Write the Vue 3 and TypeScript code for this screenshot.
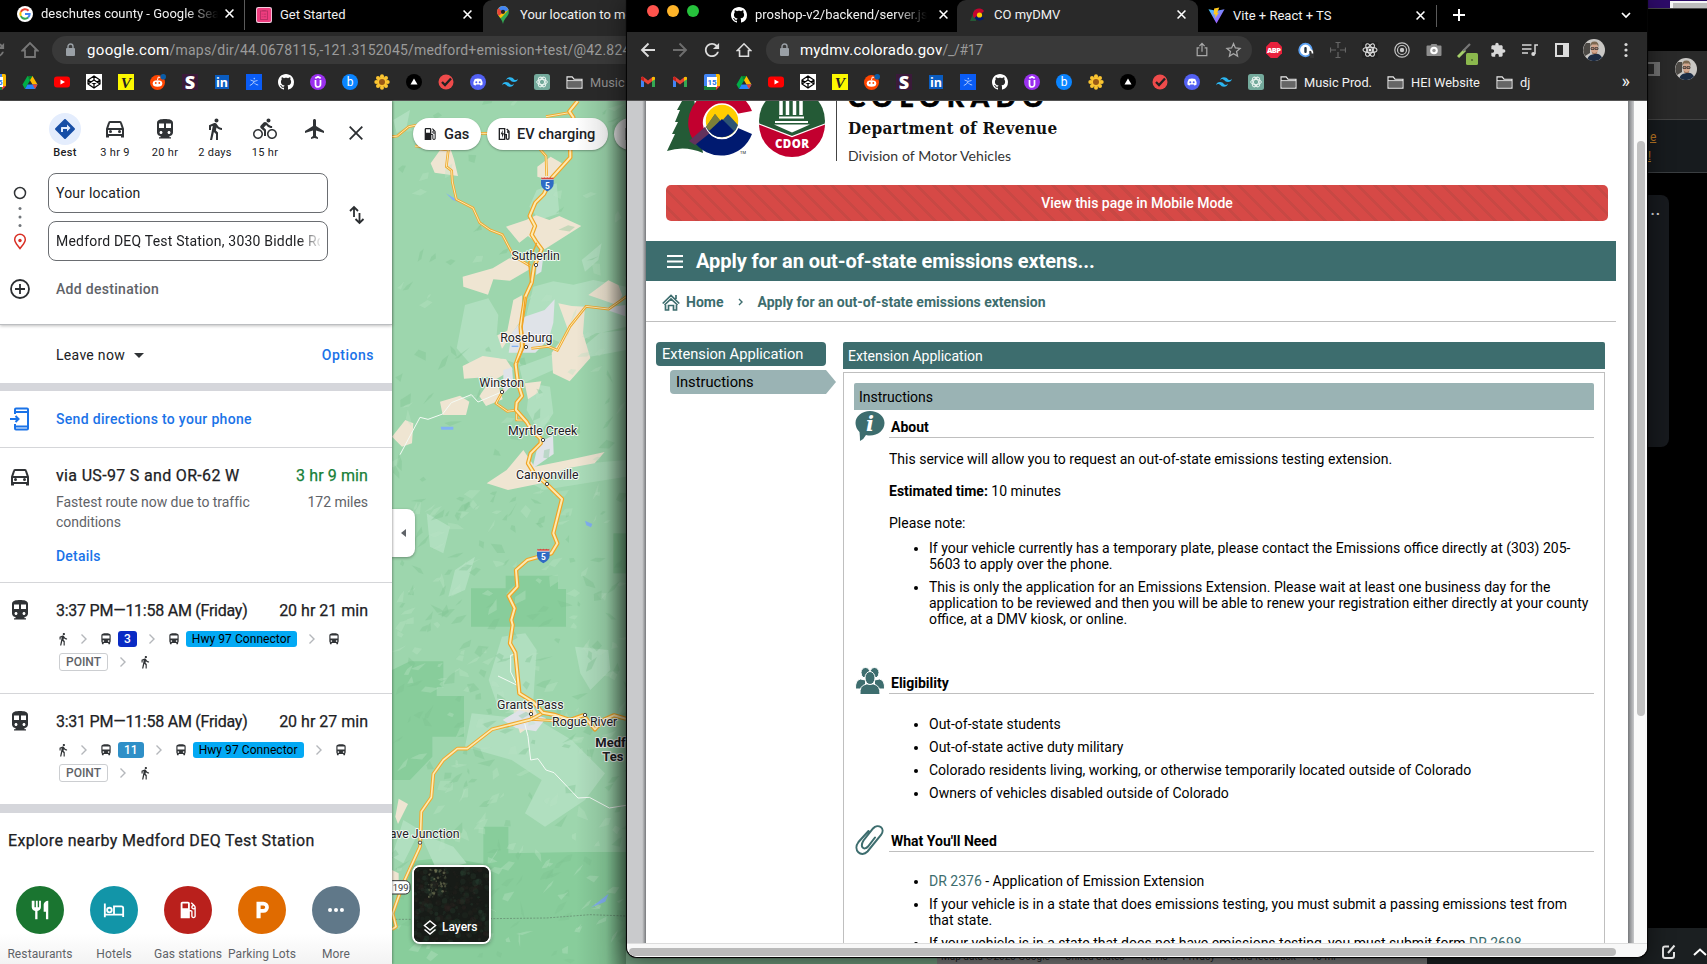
<script setup lang="ts">
interface Segment { kind: 'walk' | 'bus' | 'sep' | 'badge' | 'outline'; text?: string; tone?: string }
interface Trip { title: string; time: string; first: Segment[] }

const bookmarks: string[] = ['gmail', 'gmail', 'cal', 'drive', 'yt', 'codepen', 'vee', 'reddit', 'slack', 'linkedin', 'figure', 'github', 'udemy', 'bee', 'flower', 'tri', 'check', 'discord', 'tailwind', 'gpt']
const backBookmarks = bookmarks.slice(2)
const extensions: string[] = ['abp', 'onepass', 'cross', 'react', 'target', 'camera', 'dropper', 'puzzle', 'queue', 'sidebar', 'avatar', 'dots']

const modes = [
  { icon: 'diamond', label: 'Best' },
  { icon: 'car', label: '3 hr 9' },
  { icon: 'train', label: '20 hr' },
  { icon: 'walk', label: '2 days' },
  { icon: 'bike', label: '15 hr' },
  { icon: 'flight', label: '' },
]

const seg = (num: string, tone: string): Segment[] => [
  { kind: 'walk' }, { kind: 'sep' }, { kind: 'bus' }, { kind: 'badge', text: num, tone },
  { kind: 'sep' }, { kind: 'bus' }, { kind: 'badge', text: 'Hwy 97 Connector', tone: 'sky' },
  { kind: 'sep' }, { kind: 'bus' },
]
const trips: Trip[] = [
  { title: '3:37 PM—11:58 AM (Friday)', time: '20 hr 21 min', first: seg('3', 'navy') },
  { title: '3:31 PM—11:58 AM (Friday)', time: '20 hr 27 min', first: seg('11', 'steel') },
]

const nearby = [
  { icon: 'food', label: 'Restaurants', tone: 'green' },
  { icon: 'bed', label: 'Hotels', tone: 'teal' },
  { icon: 'gas', label: 'Gas stations', tone: 'red' },
  { icon: 'park', label: 'Parking Lots', tone: 'orange' },
  { icon: 'more', label: 'More', tone: 'slate' },
]

const towns = [
  { name: 'Sutherlin', x: 437, y: 480, dx: 438, dy: 495 },
  { name: 'Roseburg', x: 409, y: 727, dx: 408, dy: 741 },
  { name: 'Winston', x: 335, y: 861, dx: 336, dy: 876 },
  { name: 'Myrtle Creek', x: 458, y: 1005, dx: 459, dy: 1020 },
  { name: 'Canyonville', x: 472, y: 1138, dx: 471, dy: 1152 },
  { name: 'Grants Pass', x: 421, y: 1828, dx: 423, dy: 1842 },
  { name: 'Rogue River', x: 584, y: 1879, dx: 585, dy: 1845 },
  { name: 'ave Junction', x: 104, y: 2215, dx: 90, dy: 2228 },
]

const i5 = 'M563 3 L538 34 L550 52 L540 90 L541 172 L485 234 L462 282 L436 308 L419 348 L435 378 L425 404 L440 428 L455 448 L432 500 L425 548 L406 590 L392 680 L396 740 L377 794 L384 850 L396 888 L380 908 L378 930 L410 966 L424 990 L452 1016 L452 1030 L422 1060 L414 1090 L430 1116 L470 1152 L516 1197 L490 1300 L502 1330 L484 1360 L412 1380 L378 1410 L382 1460 L356 1488 L374 1525 L364 1560 L368 1575 L360 1630 L376 1658 L388 1780 L430 1806 L458 1838 L495 1845 L540 1860 L580 1846 L615 1888 L640 1860 L672 1846 L708 1856'
const us199 = 'M460 1838 L424 1858 L306 1888 L232 1946 L202 1946 L160 1980 L130 2022 L124 2092 L94 2135 L90 2240 L42 2345 L8 2440 L18 2480 L6 2488'

// Deterministic terrain facets scattered over the forest.
let state = 7
const rnd = (): number => { state = (state * 16807) % 2147483647; return state / 2147483647 }
const facets = Array.from({ length: 420 }, (_, i) => {
  const x = rnd() * 710
  const y = i < 80 ? rnd() * 1200 : 1180 + rnd() * 1400
  const angle = -1.2 + rnd() * 1.1 + (rnd() > 0.85 ? 1.6 : 0)
  const l = 16 + rnd() * 40
  const w = 4 + rnd() * 14
  const c = Math.cos(angle)
  const s = Math.sin(angle)
  const at = (u: number, v: number): string => `${(x + u * c - v * s).toFixed(1)},${(y + u * s + v * c).toFixed(1)}`
  const pts = [at(0, 0), at(l * (0.3 + rnd() * 0.4), -w * rnd()), at(l, w * (rnd() - 0.5)), at(l * (0.2 + rnd() * 0.5), w)].join(' ')
  return { pts, light: rnd() > 0.5 }
})
const canopy = Array.from({ length: 420 }, () => ({ x: rnd() * 76, y: rnd() * 76, r: 0.6 + rnd() * 2.6, o: rnd() * 0.4, l: rnd() > 0.5 }))
const clearing = Array.from({ length: 60 }, () => ({ x: 14 + rnd() * 18, y: 2 + rnd() * 28, r: 0.4 + rnd() * 1.1, o: 0.2 + rnd() * 0.4 }))

const notes = [
  ['If your vehicle currently has a temporary plate, please contact the Emissions office directly at (303) 205-', '5603 to apply over the phone.'],
  ['This is only the application for an Emissions Extension. Please wait at least one business day for the', 'application to be reviewed and then you will be able to renew your registration either directly at your county', 'office, at a DMV kiosk, or online.'],
]
const eligible = ['Out-of-state students', 'Out-of-state active duty military', 'Colorado residents living, working, or otherwise temporarily located outside of Colorado', 'Owners of vehicles disabled outside of Colorado']
</script>

<template>
  <div class="desk">
    <svg class="defs" width="0" height="0">
      <linearGradient id="edge"><stop offset="0" stop-color="#000" stop-opacity="0" /><stop offset=".6" stop-color="#000" stop-opacity=".1" /><stop offset="1" stop-color="#000" stop-opacity=".42" /></linearGradient>
      <linearGradient id="vg" x1="0" y1="0" x2="1" y2="1"><stop offset="0" stop-color="#41d1ff" /><stop offset="1" stop-color="#bd34fe" /></linearGradient>
      <symbol id="google" viewBox="0 0 18 18"><circle cx="9" cy="9" r="9" fill="#fff" /><g fill="none" stroke-width="2.300"><path d="M13 5.400A5.300 5.300 0 0 0 4.300 6.600" stroke="#ea4335" /><path d="M4.300 6.600a5.300 5.300 0 0 0 0 4.800" stroke="#fbbc05" /><path d="M4.300 11.400a5.300 5.300 0 0 0 8.200 1.600" stroke="#34a853" /><path d="M9 9h5.200a5.300 5.300 0 0 1-1.700 4" stroke="#4285f4" /></g></symbol>
      <symbol id="clip" viewBox="0 0 18 18"><rect width="18" height="18" rx="2.500" fill="#f3cfe0" /><rect x="1" y="1" width="16" height="16" rx="2" fill="#ee3d7f" /><g fill="none" stroke="#b72f63"><rect x="5" y="4.500" width="8" height="9.500" /><path d="M7 4h4M6.500 8h1m1 0h3M6.500 11h1m1 0h3" /></g></symbol>
      <symbol id="pin" viewBox="0 0 14 20"><path d="M7 0a6.500 6.500 0 0 1 6.500 6.500C13.500 12 8.500 13 7 20 5.500 13 .5 12 .5 6.500A6.500 6.500 0 0 1 7 0z" fill="#34a853" /><path d="M7 0A6.500 6.500 0 0 1 13.200 4.500L4.500 13.500C2.500 11.500.5 9.500.5 6.500A6.500 6.500 0 0 1 7 0z" fill="#fbbc04" /><path d="M7 0a6.500 6.500 0 0 1 6.200 4.500L8 7 2 10.500C-1 4 3 0 7 0z" fill="#4285f4" /><path d="M2 2.400 7 7 2.200 11C-.5 7 .5 4 2 2.400z" fill="#ea4335" /><circle cx="7" cy="6.500" r="2.300" fill="#222" /></symbol>
      <symbol id="gmail" viewBox="0 0 16 16"><path d="M1 3v10h3V6.500z" fill="#4285f4" /><path d="M15 3v10h-3V6.500z" fill="#34a853" /><path d="M1 6V3.500Q2 2 3.500 3L8 6.500 12.500 3v4L8 10.500 3.500 7z" fill="#ea4335" /><path d="M12 7V3.200Q14 2 15 3.500V5.500z" fill="#fbbc04" /><path d="M1 5.500V4Q2 2.200 4 3.500V7.500z" fill="#c5221f" /></symbol>
      <symbol id="cal" viewBox="0 0 16 16"><path d="M0 1.500Q0 0 1.500 0H12v4H4v12H1.500Q0 16 0 14.500z" fill="#4285f4" /><path d="M12 0h2.500Q16 0 16 1.500V12h-4z" fill="#fbbc04" /><path d="M0 12h12v4H1.500Q0 16 0 14.500z" fill="#188038" /><path d="M12 12h4l-4 4z" fill="#ea4335" /><path d="M3 3h10v10H3z" fill="#fff" /><text x="8" y="11" font-size="8" font-weight="700" font-family="Roboto" text-anchor="middle" fill="#1a73e8">15</text></symbol>
      <symbol id="drive" viewBox="0 0 16 16"><path d="M5.500 2h5l5 8.500h-5z" fill="#ffba00" /><path d="M5.500 2 8 6.500 3 15 .5 10.500z" fill="#00ac47" /><path d="M5.500 10.500h10L13 15H3z" fill="#2684fc" /><path d="M5.500 2h5L8 6.200z" fill="#00832d" /><path d="M13 15l2.500-4.500h-5z" fill="#ea4335" /></symbol>
      <symbol id="yt" viewBox="0 0 16 16"><rect y="2.500" width="16" height="11" rx="3" fill="#f00" /><path d="M6.500 5.500v5L11 8z" fill="#fff" /></symbol>
      <symbol id="codepen" viewBox="0 0 16 16"><path d="M0 0h16v16H0z" fill="#fff" /><g fill="none" stroke="#000" stroke-width="1.200"><path d="M8 2l6 4v4l-6 4-6-4V6zM8 2v4m0 4v4M2 6l6 4 6-4M2 10l6-4 6 4" /></g></symbol>
      <symbol id="vee" viewBox="0 0 16 16"><path d="M0 0h16v16H0z" fill="#fcf800" /><text x="8" y="13.500" font-size="15.500" font-weight="700" font-style="italic" font-family="Liberation Serif" text-anchor="middle" fill="#222">V</text></symbol>
      <symbol id="reddit" viewBox="0 0 16 16"><circle cx="7.500" cy="8.500" r="7.500" fill="#ff4500" /><ellipse cx="7.500" cy="9.500" rx="4.800" ry="3.300" fill="#fff" /><circle cx="5.800" cy="9" r=".9" fill="#ff4500" /><circle cx="9.300" cy="9" r=".9" fill="#ff4500" /><path d="M7.500 6l.8-3 2 .5" stroke="#fff" fill="none" /><circle cx="13.200" cy="2.800" r="2.800" fill="#0b5da8" /></symbol>
      <symbol id="slack" viewBox="0 0 16 16"><path d="M0 0h16v16H0z" fill="#3b1a3a" /><text x="8" y="14.800" font-size="18" font-weight="900" font-family="Open Sans" text-anchor="middle" fill="#fff">S</text></symbol>
      <symbol id="linkedin" viewBox="0 0 16 16"><path d="M1 1h14v14H1z" fill="#0a5cc0" /><text x="8" y="13" font-size="12.500" font-weight="700" font-family="Open Sans" text-anchor="middle" fill="#fff">in</text></symbol>
      <symbol id="figure" viewBox="0 0 16 16"><path d="M0 0h16v16H0z" fill="#0a5cf5" /><circle cx="8.300" cy="4.600" r=".8" fill="#9cc4ff" /><path d="M4.500 6Q8 8.500 11.500 6.500M8 7.500Q7 10.500 3.800 11.500M8 8.500q1.500 2.500 4.200 2.500" stroke="#b8d3ff" stroke-width=".9" fill="none" /></symbol>
      <symbol id="github" viewBox="0 0 16 16"><path fill="#fff" d="M8 0C3.580 0 0 3.580 0 8c0 3.540 2.290 6.530 5.470 7.590.4.070.55-.17.55-.38 0-.19-.01-.82-.01-1.490-2.010.37-2.530-.49-2.690-.94-.09-.23-.48-.94-.82-1.130-.28-.15-.68-.52-.01-.53.63-.01 1.080.58 1.230.82.72 1.210 1.870.87 2.330.66.070-.52.28-.87.51-1.070-1.780-.2-3.640-.89-3.640-3.950 0-.87.31-1.590.82-2.150-.08-.2-.36-1.020.08-2.120 0 0 .67-.21 2.200.82.64-.18 1.320-.27 2-.27s1.360.09 2 .27c1.530-1.040 2.200-.82 2.200-.82.44 1.100.16 1.920.08 2.120.51.56.82 1.270.82 2.150 0 3.070-1.870 3.750-3.650 3.950.29.25.54.73.54 1.480 0 1.070-.01 1.930-.01 2.200 0 .21.15.46.55.38A8.010 8.010 0 0 0 16 8c0-4.420-3.580-8-8-8z" /></symbol>
      <symbol id="udemy" viewBox="0 0 16 16"><circle cx="8" cy="8" r="8" fill="#9a30ee" /><path d="M5.500 6v4.500a2.500 2.500 0 0 0 5 0V6M5.300 4.300 8 2.800l2.700 1.500" stroke="#fff" fill="none" stroke-width="1.700" /></symbol>
      <symbol id="bee" viewBox="0 0 16 16"><circle cx="8" cy="8" r="8" fill="#0a84ff" /><text x="8" y="12" font-size="12" font-family="Roboto" text-anchor="middle" fill="#fff">b</text></symbol>
      <symbol id="flower" viewBox="0 0 16 16"><g fill="#fbc531"><circle cx="8" cy="2.300" r="2" /><circle cx="8" cy="13.700" r="2" /><circle cx="2.300" cy="8" r="2" /><circle cx="13.700" cy="8" r="2" /><circle cx="4" cy="4" r="2" /><circle cx="12" cy="4" r="2" /><circle cx="4" cy="12" r="2" /><circle cx="12" cy="12" r="2" /><circle cx="8" cy="8" r="5" /></g><circle cx="8" cy="8" r="3" fill="#9a5a17" /></symbol>
      <symbol id="tri" viewBox="0 0 16 16"><circle cx="8" cy="8" r="8" fill="#000" /><path d="M8 4.500l3.500 6h-7z" fill="#fff" /></symbol>
      <symbol id="check" viewBox="0 0 16 16"><circle cx="8" cy="8" r="7.500" fill="#ef4b4b" /><path d="M4 8l3 3 6-6.500" stroke="#222" stroke-width="2.300" fill="none" /></symbol>
      <symbol id="discord" viewBox="0 0 16 16"><circle cx="8" cy="8" r="8" fill="#5260f2" /><path d="M4.800 5Q8 3.800 11.200 5q1.600 2.500 1.400 5.500-1.200 1-2.300 1l-.6-1H6.300l-.6 1q-1.200 0-2.300-1Q3.200 7.500 4.800 5z" fill="#fff" /><circle cx="6.300" cy="8.200" r="1" fill="#5260f2" /><circle cx="9.700" cy="8.200" r="1" fill="#5260f2" /></symbol>
      <symbol id="tailwind" viewBox="2 2 20 20"><path fill="#2bb5f0" d="M12 6c-2.670 0-4.330 1.330-5 4 1-1.330 2.170-1.830 3.500-1.500.76.19 1.300.74 1.910 1.350C13.390 10.830 14.500 12 17 12c2.670 0 4.330-1.330 5-4-1 1.330-2.170 1.830-3.500 1.500-.76-.19-1.300-.74-1.910-1.350C15.610 7.170 14.500 6 12 6zM7 12c-2.670 0-4.330 1.330-5 4 1-1.330 2.170-1.830 3.500-1.500.76.19 1.300.74 1.910 1.350C8.390 16.830 9.500 18 12 18c2.670 0 4.330-1.330 5-4-1 1.330-2.170 1.830-3.500 1.500-.76-.19-1.300-.74-1.910-1.350C10.610 13.170 9.500 12 7 12z" /></symbol>
      <symbol id="gpt" viewBox="0 0 16 16"><rect width="16" height="16" rx="2.500" fill="#74aa9c" /><g fill="none" stroke="#e6f2ee"><ellipse cx="8" cy="8" rx="5.300" ry="2.600" /><ellipse cx="8" cy="8" rx="5.300" ry="2.600" transform="rotate(60 8 8)" /><ellipse cx="8" cy="8" rx="5.300" ry="2.600" transform="rotate(120 8 8)" /></g></symbol>
      <symbol id="folder" viewBox="0 0 18 16"><path d="M1 14V2h5.500l2 2.500H17V14z" fill="#292929" stroke="#ececec" stroke-width="1.200" /><path d="M2 6.500h14V13H2z" fill="#666" /><path d="M1 6h16" stroke="#ececec" /></symbol>
      <symbol id="vite" viewBox="0 0 18 18"><path d="M.5 2.500 9 17.500l8.500-15L9 4z" fill="url(#vg)" /><path d="M12 .5 6.500 1.600 6 8h2l-.6 4 4-6H9.600z" fill="#ffc81f" /></symbol>
      <symbol id="colo" viewBox="0 0 16 14"><path d="M5 1 0 13h6z" fill="#245a36" /><path d="M14 3A6 6 0 0 0 4 10l5-2z" fill="#c2042f" /><path d="M14 10.500A6 6 0 0 1 4.500 10L9 6z" fill="#001a70" /><circle cx="9.500" cy="7" r="2.600" fill="#ffcd00" /></symbol>
      <symbol id="x" viewBox="0 0 8 8"><path d="M.5.5l7 7m0-7l-7 7" stroke="#fff" stroke-width="1.400" /></symbol>
      <symbol id="lock" viewBox="0 0 10 14"><rect y="5" width="9" height="8" rx="1" fill="#9aa0a6" /><path d="M2 6V3.500a2.500 2.500 0 0 1 5 0V6" fill="none" stroke="#9aa0a6" stroke-width="1.400" /></symbol>
      <symbol id="back" viewBox="0 0 16 16"><path d="M15 8H2m6.500-6.500L2 8l6.500 6.500" fill="none" stroke="currentColor" stroke-width="1.900" /></symbol>
      <symbol id="reload" viewBox="3 3 18 18"><path fill="currentColor" d="M17.650 6.350C16.200 4.900 14.210 4 12 4c-4.420 0-7.990 3.580-7.990 8s3.570 8 7.990 8c3.730 0 6.840-2.550 7.730-6h-2.080c-.82 2.330-3.040 4-5.650 4-3.310 0-6-2.690-6-6s2.690-6 6-6c1.660 0 3.140.69 4.220 1.780L13 11h7V4l-2.350 2.350z" /></symbol>
      <symbol id="house" viewBox="0 0 18 18"><path d="M1.500 9.500 9 2l7.500 7.500H14V16H4V9.500z" fill="none" stroke="currentColor" stroke-width="1.800" /></symbol>
      <symbol id="share" viewBox="0 0 16 18"><path d="M5 6.500H2.500v9h11v-9H11M8 11V1.500M5 4.500l3-3 3 3" fill="none" stroke="#a9a9a9" stroke-width="1.400" /></symbol>
      <symbol id="star" viewBox="0 0 18 18"><path d="M9 1.800l2.100 4.900 5.300.5-4 3.500 1.200 5.200L9 13.100l-4.600 2.800 1.200-5.200-4-3.500 5.300-.5z" fill="none" stroke="#a9a9a9" stroke-width="1.400" /></symbol>
      <symbol id="abp" viewBox="0 0 16 16"><path d="M4.700 0h6.600L16 4.700v6.600L11.300 16H4.700L0 11.300V4.700z" fill="#e8203c" /><text x="8" y="10.800" font-size="7.500" font-weight="800" font-family="Open Sans" text-anchor="middle" textLength="14" fill="#fff">ABP</text></symbol>
      <symbol id="onepass" viewBox="0 0 16 16"><circle cx="7.500" cy="8" r="6.300" fill="#fff" stroke="#5aa0f2" stroke-width="1.800" /><rect x="6.300" y="5" width="2.400" height="6" rx="1" fill="#234" /><path d="M11 8h5v8h-4z" fill="#333" /><path d="M10 9l1.500-1q3-.5 3 3.500" fill="none" stroke="#fff" stroke-width="1.600" /></symbol>
      <symbol id="cross" viewBox="0 0 16 16"><path d="M8 0v6m0 4v6M0 8h6m4 0h6M5.500.5h5M5.500 15.500h5M.5 5.500v5M15.500 5.500v5" stroke="#666" stroke-width="1.200" /></symbol>
      <symbol id="react" viewBox="0 0 16 16"><path d="M0 0h16v16H0z" fill="#222" /><g fill="none" stroke="#ddd" stroke-width="1.100"><ellipse cx="8" cy="8" rx="7" ry="2.700" /><ellipse cx="8" cy="8" rx="7" ry="2.700" transform="rotate(60 8 8)" /><ellipse cx="8" cy="8" rx="7" ry="2.700" transform="rotate(120 8 8)" /></g><circle cx="8" cy="8" r="1.500" fill="#eee" /></symbol>
      <symbol id="target" viewBox="0 0 16 16"><g fill="none" stroke="#c6c6c6" stroke-width="1.200"><circle cx="8" cy="8" r="7.200" /><circle cx="8" cy="8" r="4.500" /></g><circle cx="8" cy="8" r="2.200" fill="#c6c6c6" /></symbol>
      <symbol id="camera" viewBox="0 0 16 16"><path d="M.5 4.500q0-1 1-1h3l1-1.500h5l1 1.500h3q1 0 1 1V13q0 1-1 1h-13q-1 0-1-1z" fill="#8e8e8e" /><circle cx="8" cy="8.500" r="3.800" fill="#fff" /><circle cx="8" cy="8.500" r="1.700" fill="#999" /></symbol>
      <symbol id="dropper" viewBox="0 0 21 24"><path d="M1 16 8 9" stroke="#a5d06a" stroke-width="3" /><path d="M6 10l7-7" stroke="#777" stroke-width="2.200" /><rect x="9" y="12" width="12" height="12" rx="1.500" fill="#8bb84d" /><circle cx="15" cy="19" r=".7" fill="#111" /></symbol>
      <symbol id="puzzle" viewBox="0 0 24 24"><path fill="#d8d8d8" d="M20.500 11H19V7c0-1.100-.9-2-2-2h-4V3.500C13 2.120 11.880 1 10.500 1S8 2.120 8 3.500V5H4c-1.100 0-1.990.9-1.990 2v3.800H3.500c1.490 0 2.700 1.210 2.700 2.700s-1.210 2.700-2.700 2.700H2V20c0 1.100.9 2 2 2h3.800v-1.500c0-1.490 1.210-2.700 2.700-2.700 1.490 0 2.700 1.210 2.700 2.700V22H17c1.100 0 2-.9 2-2v-4h1.500c1.380 0 2.500-1.120 2.500-2.500S21.880 11 20.500 11z" /></symbol>
      <symbol id="queue" viewBox="0 0 16 16"><path d="M0 3h9.500M0 7h9.500M0 11h6M16 3h-3v9" stroke="#d8d8d8" stroke-width="1.500" fill="none" /><circle cx="11.300" cy="12" r="2" fill="#d8d8d8" /></symbol>
      <symbol id="sidebar" viewBox="0 0 16 16"><path d="M1 1h14v14H1z" fill="#dcdcdc" /><path d="M3 3h6v10H3z" fill="#292929" /></symbol>
      <symbol id="avatar" viewBox="0 0 22 22"><circle cx="11" cy="11" r="11" fill="#c9c7c4" /><path d="M3 4a11 11 0 0 0-1 13l5-3V4z" fill="#4c4945" /><path d="M4.500 20q1-4 5-4.500 7-2.500 9.500 3a11 11 0 0 1-14.500 1.500z" fill="#1c2c44" /><ellipse cx="11.500" cy="9.800" rx="3.600" ry="5.200" fill="#d3a58c" /><path d="M7.300 8Q6.500 2.500 11.500 2.500q4.500 0 4 5.500L14 5.500H9z" fill="#7d6850" /><path d="M8 8.700h3v1.700H8zm4 0h3v1.700h-3z" fill="none" stroke="#2c2a2a" stroke-width=".8" /><path d="M8.500 12.500q3 3 6 0l-1 2.500h-4z" fill="#9a7058" /></symbol>
      <symbol id="dots" viewBox="0 0 16 16"><g fill="#d8d8d8"><circle cx="8" cy="2.500" r="1.600" /><circle cx="8" cy="8" r="1.600" /><circle cx="8" cy="13.500" r="1.600" /></g></symbol>
      <symbol id="diamond" viewBox="0 0 24 24"><path fill="#174ea6" d="M21.710 11.290l-9-9c-.39-.39-1.020-.39-1.410 0l-9 9c-.39.39-.39 1.020 0 1.410l9 9c.39.39 1.020.39 1.410 0l9-9c.39-.38.39-1.010 0-1.410zM14 14.500V12h-4v3H8v-4c0-.55.45-1 1-1h5V7.500l3.500 3.500-3.500 3.500z" /></symbol>
      <symbol id="car" viewBox="0 0 24 24"><path d="M4 19v-7l2-6q.2-1 1-1h10q.8 0 1 1l2 6v7M4 18h16M4 12h16" fill="none" stroke="currentColor" stroke-width="2" /><path d="M3 12v8.500h3V18h12v2.500h3V12h-2v5H5v-5z" fill="currentColor" /><circle cx="7.500" cy="14.500" r="1.500" fill="currentColor" /><circle cx="16.500" cy="14.500" r="1.500" fill="currentColor" /></symbol>
      <symbol id="train" viewBox="0 0 24 24"><path fill="currentColor" d="M12 2c-4 0-8 .5-8 4v9.500C4 17.430 5.570 19 7.500 19v1.300H6V21.500h12v-1.200h-1.500V19c1.930 0 3.500-1.570 3.500-3.500V6c0-3.500-4-4-8-4zM8 17c-.83 0-1.500-.67-1.500-1.500S7.170 14 8 14s1.500.67 1.500 1.500S8.830 17 8 17zm3-6H6V6.500h5V11zm2 0V6.500h5V11h-5zm3 6c-.83 0-1.500-.67-1.500-1.500s.67-1.500 1.500-1.500 1.500.67 1.500 1.500-.67 1.500-1.500 1.500z" /></symbol>
      <symbol id="walk" viewBox="0 0 24 24"><path fill="currentColor" d="M13.500 5.500c1.100 0 2-.9 2-2s-.9-2-2-2-2 .9-2 2 .9 2 2 2zM9.800 8.900L7 23h2.100l1.800-8 2.100 2v6h2v-7.500l-2.100-2 .6-3C14.800 12 16.800 13 19 13v-2c-1.900 0-3.500-1-4.300-2.400l-1-1.600c-.4-.6-1-1-1.700-1-.3 0-.5.100-.8.100L6 8.300V13h2V9.600l1.800-.7" /></symbol>
      <symbol id="bike" viewBox="0 0 24 24"><path fill="currentColor" d="M15.500 5.500c1.100 0 2-.9 2-2s-.9-2-2-2-2 .9-2 2 .9 2 2 2zM5 12c-2.800 0-5 2.200-5 5s2.200 5 5 5 5-2.200 5-5-2.200-5-5-5zm0 8.500c-1.900 0-3.500-1.600-3.500-3.500s1.600-3.500 3.500-3.500 3.500 1.600 3.500 3.500-1.600 3.500-3.500 3.500zm5.800-10l2.400-2.400.8.800c1.300 1.300 3 2.100 5.100 2.100V9c-1.500 0-2.700-.6-3.600-1.500l-1.900-1.900c-.5-.4-1-.6-1.600-.6s-1.100.2-1.400.6L7.800 8.400c-.4.4-.6.9-.6 1.400 0 .6.2 1.100.6 1.400L11 14v5h2v-6.200l-2.200-2.300zM19 12c-2.800 0-5 2.200-5 5s2.200 5 5 5 5-2.200 5-5-2.200-5-5-5zm0 8.500c-1.900 0-3.500-1.600-3.500-3.500s1.600-3.500 3.500-3.500 3.500 1.600 3.500 3.500-1.600 3.500-3.500 3.500z" /></symbol>
      <symbol id="flight" viewBox="0 0 24 24"><path fill="currentColor" d="M21 16v-2l-8-5V3.500c0-.83-.67-1.500-1.500-1.500S10 2.670 10 3.500V9l-8 5v2l8-2.500V19l-2 1.500V22l3.500-1 3.500 1v-1.500L13 19v-5.500l8 2.500z" /></symbol>
      <symbol id="bus" viewBox="0 0 24 24"><path fill="currentColor" d="M4 16c0 .88.39 1.670 1 2.220V20c0 .55.45 1 1 1h1c.55 0 1-.45 1-1v-1h8v1c0 .55.45 1 1 1h1c.55 0 1-.45 1-1v-1.780c.61-.55 1-1.340 1-2.220V6c0-3.500-3.580-4-8-4s-8 .5-8 4v10zm3.500 1c-.83 0-1.500-.67-1.500-1.500S6.670 14 7.500 14s1.500.67 1.500 1.500S8.330 17 7.500 17zm9 0c-.83 0-1.500-.67-1.500-1.500s.67-1.500 1.500-1.500 1.500.67 1.500 1.500-.67 1.500-1.500 1.500zm1.500-6H6V6h12v5z" /></symbol>
      <symbol id="sep" viewBox="0 0 12 12"><path d="M3.500 1.500 8 6l-4.500 4.500" fill="none" stroke="#b4b7bb" stroke-width="1.400" /></symbol>
      <symbol id="food" viewBox="0 0 24 24"><path fill="#fff" d="M11 9H9.500V2h-2v7H6V2H3v7c0 2.120 1.660 3.840 3.750 3.970V22h2.500v-9.030C11.340 12.840 13 11.120 13 9V2h-2v7zm5-3v8h2.500v8H21V2c-2.760 0-5 2.240-5 4z" /></symbol>
      <symbol id="bed" viewBox="0 0 24 24"><path d="M2 5v15M2 17h20M22 19.500V10q0-2-2-2h-8v9" fill="none" stroke="#fff" stroke-width="2" /><circle cx="7" cy="12" r="2.500" fill="none" stroke="#fff" stroke-width="2" /></symbol>
      <symbol id="gas" viewBox="0 0 24 24"><path fill="currentColor" d="M19.770 7.230l.01-.01-3.720-3.720L15 4.560l2.110 2.110c-.94.36-1.610 1.260-1.610 2.330 0 1.380 1.120 2.500 2.500 2.500.36 0 .69-.08 1-.21v7.210c0 .55-.45 1-1 1s-1-.45-1-1V14c0-1.100-.9-2-2-2h-1V5c0-1.100-.9-2-2-2H6c-1.100 0-2 .9-2 2v16h10v-7.500h1.500v5c0 1.380 1.120 2.500 2.500 2.500s2.500-1.120 2.500-2.500V9c0-.69-.28-1.320-.73-1.770zM12 10H6V5h6v5zm6 0c-.55 0-1-.45-1-1s.45-1 1-1 1 .45 1 1-.45 1-1 1z" /></symbol>
      <symbol id="ev" viewBox="0 0 24 24"><path d="M5 4h8v16H5zM13 13h2.500v5a2 2 0 0 0 4 0V8L16 4.500" fill="none" stroke="currentColor" stroke-width="2" /><circle cx="18" cy="9" r="1.600" fill="currentColor" /><path d="M10 6l-3 6.500h2V18l3-7h-2z" fill="currentColor" /></symbol>
      <symbol id="park" viewBox="0 0 24 24"><path d="M6 3h7.500a6 6 0 0 1 0 12H10.500v6H6zM10.500 7v4h3a2 2 0 0 0 0-4z" fill="#fff" fill-rule="evenodd" /></symbol>
      <symbol id="more" viewBox="0 0 24 24"><g fill="#fff"><circle cx="5.500" cy="12" r="2.200" /><circle cx="12" cy="12" r="2.200" /><circle cx="18.500" cy="12" r="2.200" /></g></symbol>
      <symbol id="shield" viewBox="0 0 40 46"><path d="M2 2q5 3 9 0 4 3 9 0 5 3 9 0 4 3 9 0v8H2z" fill="#d8483f" /><path d="M1 9h38v12q0 14-19 24Q1 35 1 21z" fill="#2f6bc4" /><path d="M1 8h38v2H1z" fill="#fff" /><text x="20" y="36" font-size="25" font-weight="700" font-family="Roboto" text-anchor="middle" fill="#fff">5</text></symbol>
    </svg>

    <!-- Far background window -->
    <aside class="far">
      <div class="far-purple"><i></i></div>
      <div class="far-tabs"></div>
      <div class="far-tools">
        <svg class="s16 dim"><use href="#sidebar" /></svg>
        <svg class="s22"><use href="#avatar" /></svg>
      </div>
      <div class="far-note"><u>e</u><u class="bang">!</u></div>
      <div class="far-body"><div class="far-card">··</div></div>
      <div class="far-foot">
        <svg width="16" height="16" viewBox="0 0 16 16"><path d="M8 2.500H4q-2 0-2 2V12q0 2 2 2h7q2 0 2-2V8M7 9l6.500-7.500" fill="none" stroke="#e4e4e4" stroke-width="2" /></svg>
        <svg width="14" height="10" viewBox="0 0 14 10"><path d="M1 8l6-5.500L13 8" fill="none" stroke="#fff" stroke-width="2" /></svg>
      </div>
    </aside>

    <!-- Maps window -->
    <section class="maps">
      <div class="tabs">
        <div class="tab t1"><svg class="s18"><use href="#google" /></svg><span class="fade w177">deschutes county - Google Sea</span><svg class="s8"><use href="#x" /></svg></div>
        <div class="tab t2"><svg class="s18"><use href="#clip" /></svg><span class="grow">Get Started</span><svg class="s8"><use href="#x" /></svg></div>
        <div class="tab t3 on"><svg width="14" height="18"><use href="#pin" /></svg><span>Your location to medford</span></div>
      </div>
      <div class="bar">
        <svg class="s18 re"><use href="#reload" /></svg><svg class="s18 ho"><use href="#house" /></svg>
        <div class="pill back-pill"><svg width="10" height="14"><use href="#lock" /></svg><span class="url u1"><b>google.com</b>/maps/dir/44.0678115,-121.3152045/medford+emission+test/@42.8241</span></div>
      </div>
      <div class="marks back-marks">
        <span v-for="(b, i) in backBookmarks" :key="i" class="mark"><svg class="s16"><use :href="'#' + b" /></svg></span>
        <svg class="fold"><use href="#folder" /></svg><span class="dimtxt">Music Prod.</span>
      </div>

      <div class="maps-body">
        <div class="panel">
          <header class="head">
            <div class="modes">
              <div v-for="(m, i) in modes" :key="m.icon" class="mode" :class="{ best: i === 0 }">
                <span class="disc"><svg class="s24"><use :href="'#' + m.icon" /></svg></span><label>{{ m.label }}</label>
              </div>
              <svg class="close" width="14" height="14" viewBox="0 0 14 14"><path d="M.7.7l12.600 12.600m0-12.600L.7 13.300" stroke="#2b2e31" stroke-width="1.800" /></svg>
            </div>
            <div class="route">
              <svg class="trail" width="40" height="88" viewBox="0 0 40 88"><circle cx="20" cy="20" r="5.500" fill="none" stroke="#303336" stroke-width="1.500" /><g fill="#70757a"><circle cx="20" cy="35.500" r="1.500" /><circle cx="20" cy="44" r="1.500" /><circle cx="20" cy="52.500" r="1.500" /></g><path d="M20 75.500c-2-3-5.300-5.500-5.300-9a5.300 5.300 0 0 1 10.600 0c0 3.500-3.300 6-5.300 9z" fill="none" stroke="#d93025" stroke-width="1.500" /><circle cx="20" cy="67.500" r="1.700" fill="#d93025" /></svg>
              <div class="fields"><div class="field">Your location</div><div class="field"><span class="clip">Medford DEQ Test Station, 3030 Biddle Rd</span></div></div>
              <svg class="swap" width="16" height="20" viewBox="0 0 16 20"><path d="M5 12V2M1 6l4-4 4 4M10.500 8v10M6.500 14l4 4 4-4" fill="none" stroke="#2b2e31" stroke-width="1.800" /></svg>
            </div>
            <div class="add"><svg width="20" height="20" viewBox="0 0 20 20"><circle cx="10" cy="10" r="9" fill="none" stroke="#2b2e31" stroke-width="1.800" /><path d="M10 5v10M5 10h10" stroke="#2b2e31" stroke-width="1.800" /></svg><span>Add destination</span></div>
          </header>
          <div class="leave"><span>Leave now</span><i class="caret"></i><a>Options</a></div>
          <div class="send"><svg width="20" height="24" viewBox="0 0 20 24"><path d="M5 7V2.500Q5 1.500 6 1.500h11q1 0 1 1v19q0 1-1 1H6q-1 0-1-1V17M5 5h13M5 19.500h13M0 12h8M5.500 9l3 3-3 3" fill="none" stroke="#1a73e8" stroke-width="2" /></svg><a>Send directions to your phone</a></div>
          <article class="trip drive">
            <svg class="s24 lead"><use href="#car" /></svg>
            <div class="grow">
              <div class="row"><h3 class="k1">via US-97 S and OR-62 W</h3><h3 class="fast">3 hr 9 min</h3></div>
              <div class="row sub"><p>Fastest route now due to traffic<br>conditions</p><p>172 miles</p></div>
              <a class="details">Details</a>
            </div>
          </article>
          <article v-for="t in trips" :key="t.title" class="trip">
            <svg class="s24 lead"><use href="#train" /></svg>
            <div class="grow">
              <div class="row"><h3 class="k2">{{ t.title }}</h3><h3>{{ t.time }}</h3></div>
              <div class="segs">
                <template v-for="(s, i) in t.first" :key="i">
                  <span v-if="s.kind === 'badge'" class="badge" :class="s.tone">{{ s.text }}</span>
                  <svg v-else :class="['ic', s.kind]"><use :href="'#' + s.kind" /></svg>
                </template>
              </div>
              <div class="segs second"><span class="point">POINT</span><svg class="ic sep"><use href="#sep" /></svg><svg class="ic walk"><use href="#walk" /></svg></div>
            </div>
          </article>
          <footer class="nearby">
            <h2>Explore nearby Medford DEQ Test Station</h2>
            <div class="spots"><div v-for="n in nearby" :key="n.label" class="spot"><span class="orb" :class="n.tone"><svg class="s24"><use :href="'#' + n.icon" /></svg></span><label>{{ n.label }}</label></div></div>
          </footer>
        </div>

        <div class="map">
          <svg class="terrain" width="234" height="863" viewBox="6 3 702 2589">
            <path d="M0 0h720v2600H0z" fill="#9dd6ad" />
            <g fill="#88cd9b"><path d="M243 1465h104v-38h157v40h24v113H243zM6 1710l54-26h100v77h-20v27h82v122h-95v60L60 2040H6zM280 2180h75v80l210-4h143v336H6v-150l70-160 100-10 104 20z" /><path d="M670 1300h40v120h-40z" /></g>
            <g fill="#b0dfbf"><path d="M225 615l70-20 30 50 -5 60 60 30 12 60-60-20-80 30-52-60zM430 560l60-16 60 10 60-14 98 20v120l-80 20-60 50-100-40-60-60zM400 850l90-40 110-40 108-20v-60l-90 10-120 60-110 40zM420 850l60 10 10 80-40 60-40-70zM440 270l60-20 8 90-60 20-30-40zM575 480l60-50-10 50-40 35zM110 1240l70 40-20 80-40-20zM195 1410l60-40-30 100-50 20zM296 1740l40-130 70-10 34 50-10 150-40 50-70-40zM555 1640l100 10 6 60-60 60-30-50zM245 1840l200 20 100 60 100 100-60 80-120 80-60-40 50-100-90-60-140-40zM90 2200l100 40 40 50-90 20zM40 2160l50 30-50 100-34-20zM10 60l50-30-10 50-30 20z" /><path d="M350 1110l360-30v50l-250 40z" opacity=".7" /></g>
            <g fill="#efe5d2"><path d="M122 190l30-42h30l10 30 12 50-70-10zM442 200l40-30 34 20-40 50-34-10zM348 380l60-20 30-14 40 14 30-12 66 30-110 70-50-40-26 20zM218 530l90-25 50-30 50 10 12 22-60 35-50-4-16 46-74-24zM370 600l26-14v70l-60 90-14-40 30-14zM505 610l40 8 40 2-6 80 22 74-62 70-50-24-4-62 50-66zM218 798l60-30 70 10 20 30-50 30 20 60-50 20-20-30 40-58-86 6zM150 905l60-18 28 18-10 40h-70zM290 1150l60-40 50-60 34 50 100-20 110-24-30 34-90 16-70 44-100 20zM595 585l60-44 30 14 12 30-16 30zM6 1010l40-50 24 10-4 60-30 10zM404 850l50-6-10 34-30 20zM16 2150l10-54 28 16-30 60zM6 2310l20 10v60l-20-20zM370 1830l60-10 20 40-60 40z" /></g>
            <g fill="#dfe3e8"><path d="M404 650l60-20 30-32-4 70-14 50-40 40h-80l10-60zM340 810l26-8 4 50-30 30zM445 1030l44-24 2 56-64 44zM440 490l20-20-6 45-16 10zM636 625l70-10v34zM338 1860l50-30 80 24-30 40-60-10z" /></g>
            <polygon v-for="(f, i) in facets" :key="i" :points="f.pts" :fill="f.light ? '#b9e4c4' : '#7cc391'" opacity=".36" />
            <g fill="#82b1f3"><path d="M168 280l50 30-30-10zM152 980h38v9h-36zM585 1262l22 10-4 10-14-6zM600 2425l56-44-10 24-40 16z" /><path d="M365 737h20v4h-20z" /></g>
            <g fill="none" stroke="#f4fbf5" stroke-width="3"><path d="M330 878l-66 28-20-22-60 24-26 34-44 16-24-6-60 112M404 1870l10 40 8 70 22-4 24 34 24 8 72 76 34-2 60 32 50-8M376 1662l-14 4v50l20 40-58-28" /></g>
            <path d="M6 2458h70M300 2456l170-2 130-10 108 4" fill="none" stroke="#6e9c7b" stroke-width="3" stroke-dasharray="6 4" />
            <g fill="none" stroke="#f0a92e" stroke-width="8"><path d="M6 110l16-2 34-28 24-5 100 25h120M75 138l100 12-6 50 16 12 2 34 12 52 50 26 20 44 32 22 36 14 34 64 50 30M468 50l70-12M450 148l18 20 2 60M424 745l50-6 28 12 38-72 48-60 68 8 54-38M340 870l-22 40 34 24 28-4v30h20M424 1858l108 6M424 1830v30" /></g>
            <g fill="none" stroke="#fdeab1" stroke-width="3"><path d="M6 110l16-2 34-28 24-5 100 25h120M75 138l100 12-6 50 16 12 2 34 12 52 50 26 20 44 32 22 36 14 34 64 50 30M468 50l70-12M450 148l18 20 2 60M424 745l50-6 28 12 38-72 48-60 68 8 54-38M340 870l-22 40 34 24 28-4v30h20M424 1858l108 6M424 1830v30" /></g>
            <path :d="us199" fill="none" stroke="#f0a92e" stroke-width="11" stroke-linejoin="round" /><path :d="us199" fill="none" stroke="#fdeab1" stroke-width="5" stroke-linejoin="round" />
            <path :d="i5" fill="none" stroke="#f0a425" stroke-width="13" stroke-linejoin="round" /><path :d="i5" fill="none" stroke="#fdeab1" stroke-width="6" stroke-linejoin="round" />
            <path d="M440 428l-24 60 6 60M406 590l-10 90 8 60-24 50" fill="none" stroke="#f0a425" stroke-width="4" />
            <use href="#shield" x="452" y="229" width="40" height="47" /><use href="#shield" x="440" y="1344" width="40" height="47" />
            <g font-family="Roboto" font-size="37" text-anchor="middle" fill="#1f2124" stroke="#fff" stroke-opacity=".85" stroke-width="6" paint-order="stroke" stroke-linejoin="round">
              <template v-for="t in towns" :key="t.name"><circle :cx="t.dx" :cy="t.dy" r="5" fill="#fff" stroke="#444" stroke-opacity="1" stroke-width="3" paint-order="fill" /><text :x="t.x" :y="t.y">{{ t.name }}</text></template>
              <g font-weight="700" font-size="39" text-anchor="start"><text x="616" y="1941">Medf</text><text x="637" y="1983">Tes</text></g>
            </g>
            <rect x="-6" y="2342" width="66" height="40" rx="14" fill="#fff" stroke="#333" stroke-width="3" /><text x="32" y="2374" font-family="Roboto" font-size="28" text-anchor="middle" fill="#333">199</text>
          </svg>
          <div class="chips"><span class="chip gaschip"><svg class="s18"><use href="#gas" /></svg>Gas</span><span class="chip"><svg class="s18"><use href="#ev" /></svg>EV charging</span><span class="chip"><svg class="s18"><use href="#ev" /></svg></span></div>
          <div class="collapse"><i></i></div>
          <div class="layers">
            <svg width="76" height="76" viewBox="0 0 76 76"><path d="M0 0h76v76H0z" fill="#171b17" /><circle v-for="(c, i) in canopy" :key="i" :cx="c.x" :cy="c.y" :r="c.r" :fill="c.l ? '#2a4434' : '#2d2421'" :opacity="c.o" /><circle v-for="(c, i) in clearing" :key="'c' + i" :cx="c.x" :cy="c.y" :r="c.r" fill="#80835f" :opacity="c.o" /></svg>
            <span><svg width="14" height="15" viewBox="0 0 14 15"><path d="M7 1l5.500 4.500L7 10 1.500 5.500zM1.500 9.500 7 14l5.500-4.500" fill="none" stroke="#fff" stroke-width="1.500" /></svg>Layers</span>
          </div>
          <svg class="shade" width="50" height="863"><rect width="50" height="863" fill="url(#edge)" /></svg>
        </div>
      </div>
      <div class="credits"><span>Map data ©2023 Google</span><span>United States</span><span>Terms</span><span>Privacy</span><span>Send feedback</span><span>10 mi</span></div>
    </section>

    <!-- DMV window -->
    <section class="dmv">
      <div class="tabs front">
        <div class="lights"><i class="r"></i><i class="y"></i><i class="g"></i></div>
        <div class="tab f1"><svg class="s16"><use href="#github" /></svg><span class="fade w172">proshop-v2/backend/server.js a</span><svg class="s8"><use href="#x" /></svg></div>
        <div class="tab f2 on"><svg width="16" height="14"><use href="#colo" /></svg><span class="grow">CO myDMV</span><svg class="s8"><use href="#x" /></svg></div>
        <div class="tab f3"><svg class="s18"><use href="#vite" /></svg><span class="grow">Vite + React + TS</span><svg class="s8"><use href="#x" /></svg></div>
        <svg class="plus" width="12" height="12" viewBox="0 0 12 12"><path d="M6 0v12M0 6h12" stroke="#fff" stroke-width="2" /></svg>
        <svg class="down" width="10" height="7" viewBox="0 0 10 7"><path d="M1 1l4 4 4-4" stroke="#fff" stroke-width="1.700" fill="none" /></svg>
      </div>
      <div class="bar front-bar">
        <span class="mark"><svg class="s16"><use href="#back" /></svg></span>
        <span class="mark fwd"><svg class="s16"><use href="#back" /></svg></span>
        <span class="mark"><svg class="s16"><use href="#reload" /></svg></span>
        <span class="mark"><svg class="s18"><use href="#house" /></svg></span>
        <div class="pill front-pill"><svg width="10" height="14"><use href="#lock" /></svg><span class="url u2 grow"><b>mydmv.colorado.gov</b>/_/#17</span><svg width="14" height="16"><use href="#share" /></svg><svg class="s16"><use href="#star" /></svg></div>
        <span v-for="e in extensions" :key="e" class="mark"><svg :class="e === 'avatar' ? 's22' : e === 'dropper' ? 'drop' : 's16'"><use :href="'#' + e" /></svg></span>
      </div>
      <div class="marks front-marks">
        <span v-for="(b, i) in bookmarks" :key="i" class="mark"><svg class="s16"><use :href="'#' + b" /></svg></span>
        <svg class="fold"><use href="#folder" /></svg><span class="m1">Music Prod.</span>
        <svg class="fold"><use href="#folder" /></svg><span class="m2">HEI Website</span>
        <svg class="fold"><use href="#folder" /></svg><span class="grow">dj</span><span class="raquo">»</span>
      </div>

      <div class="view">
        <div class="gutter"></div>
        <main class="page">
          <div class="brand">
            <svg width="160" height="60" viewBox="667 101 160 60">
              <path d="M682 101l-5 9h3l-5 12h3l-6 12h3l-8 17q18-6 36 2l-10-60h-8z" fill="#245a36" />
              <path d="M752 111A33 33 0 1 0 693 140l12-9A17 17 0 0 1 736 114z" fill="#c2002f" />
              <path d="M693 140A33 33 0 0 0 752 134l-14-6A17 17 0 0 1 706 128z" fill="#001a70" />
              <path d="M689 141l17-15 4 7-15 12z" fill="#62325c" />
              <circle cx="722" cy="121" r="17" fill="#ffcd00" stroke="#fff" stroke-width="1.500" />
              <path d="M706 127l9-13 6 8 7-8 10 11a17 17 0 0 1-32 2z" fill="#2e5674" /><path d="M706 127l9-13 5 6-9 12z" fill="#7c7f38" /><path d="M709 131l13-12 12 12a16 16 0 0 1-25 0z" fill="#001a70" />
              <text x="740" y="154" font-size="4" font-family="Roboto" fill="#222">TM</text>
              <circle cx="792" cy="121" r="33" fill="#245a36" /><path d="M759 124l33 12 33-12a33 33 0 0 1-66 0z" fill="#c2002f" /><path d="M759 124l33 12.500 33-12.500" fill="none" stroke="#fff" stroke-width="1.200" />
              <path d="M781 100v15M787.500 100v15M794.500 100v15M801 100v15" stroke="#fff" stroke-width="3.500" /><path d="M779 117.500h25M775 122h33" stroke="#fff" stroke-width="2" /><path d="M774 124.500h36l-18 8z" fill="#fff" />
              <text x="792" y="147.500" font-size="11.500" font-weight="800" font-family="Open Sans" text-anchor="middle" textLength="34" fill="#fff">CDOR</text>
            </svg>
            <div class="names"><div class="n1">COLORADO</div><div class="n2">Department of Revenue</div><div class="n3">Division of Motor Vehicles</div></div>
          </div>
          <div class="mobile">View this page in Mobile Mode</div>
          <div class="titlebar"><svg width="16" height="14" viewBox="0 0 16 14"><path d="M0 2h16M0 7.500h16M0 13h16" stroke="#fff" stroke-width="2" /></svg><h1>Apply for an out-of-state emissions extens...</h1></div>
          <nav class="crumbs">
            <svg width="18" height="17" viewBox="0 0 18 17"><path d="M.7 9.500 9 1.500l8.300 8M2.500 11 9 5l6.500 6M3.500 11v5h3v-4.500h5V16h3v-5M14 1v4" fill="none" stroke="#3d6d6e" stroke-width="1.700" /></svg>
            <b class="home">Home</b><svg width="5" height="8" viewBox="0 0 5 8"><path d="M1 1l3 3-3 3" fill="none" stroke="#3d6d6e" stroke-width="1.400" /></svg><b class="here">Apply for an out-of-state emissions extension</b>
          </nav>
          <div class="cols">
            <div class="side"><div class="s-on">Extension Application</div><div class="s-sub">Instructions</div></div>
            <div class="content">
              <div class="c-head">Extension Application</div>
              <div class="sheet">
                <div class="c-sub">Instructions</div>
                <section class="blk about">
                  <svg width="30" height="30" viewBox="0 0 30 30"><path d="M15 0C23 0 29.500 5 29.500 12S23 24.500 15 24.500q-2 0-4-.5-2 4-6 6 0-4-.5-9Q.5 17 .5 12C.5 5 7 0 15 0z" fill="#3d6d6e" /><text x="15" y="20" font-size="21" font-weight="700" font-style="italic" font-family="DejaVu Serif" text-anchor="middle" fill="#fff">i</text></svg>
                  <h4>About</h4>
                </section>
                <div class="txt">
                  <p>This service will allow you to request an out-of-state emissions testing extension.</p>
                  <p><b>Estimated time:</b> 10 minutes</p>
                  <p>Please note:</p>
                </div>
                <ul class="u-note"><li v-for="n in notes" :key="n[0]"><template v-for="(l, i) in n" :key="i"><br v-if="i">{{ l }}</template></li></ul>
                <section class="blk elig">
                  <svg width="30" height="28" viewBox="0 0 30 28"><g fill="#3d6d6e" stroke="#fff"><path d="M6 5.500a4.500 5 0 0 1 9 0q0 3-2 5H8q-2-2-2-5zM15 5.500a4.500 5 0 0 1 9 0q0 3-2 5h-5q-2-2-2-5zM.5 22q-.5-9 5-10l5 1v9zM29.500 22q.5-9-5-10l-5 1v9z" /><path d="M5 27.500q-1-9 6.500-10.500h7q7 1.500 6.500 10.500z" /><ellipse cx="15" cy="11" rx="5" ry="6.500" /></g></svg>
                  <h4>Eligibility</h4>
                </section>
                <ul class="u-elig"><li v-for="e in eligible" :key="e">{{ e }}</li></ul>
                <section class="blk need">
                  <svg width="30" height="30" viewBox="0 0 30 30"><path d="M13.500 6 3.500 17C-2.500 25 6 33 12.500 26.500L26 10c5-7-3-12-8-6.500L8.500 15.500C4.500 22 9 26 13 21.500L20 12.500" fill="none" stroke="#3d6d6e" stroke-width="2" stroke-linecap="round" /></svg>
                  <h4>What You'll Need</h4>
                </section>
                <ul class="u-need">
                  <li><a>DR 2376</a> - Application of Emission Extension</li>
                  <li>If your vehicle is in a state that does emissions testing, you must submit a passing emissions test from<br>that state.</li>
                  <li>If your vehicle is in a state that does not have emissions testing, you must submit form <a>DR 2698</a></li>
                </ul>
              </div>
            </div>
          </div>
        </main>
        <div class="gutter2"></div>
        <div class="vbar"><i></i></div>
      </div>
      <div class="hbar"><i></i></div>
    </section>
  </div>
</template>

<style>
html, body { background: #000; overflow: hidden; }
</style>

<style scoped>
* { box-sizing: border-box; }
.desk { position: relative; width: 1707px; height: 964px; overflow: hidden; background: #000; font-family: Roboto, "Liberation Sans", sans-serif; font-size: 14px; }
.defs { position: absolute; visibility: hidden; }
svg { flex: none; display: block; }
h1, h2, h3, h4, p, ul { margin: 0; padding: 0; font-weight: 400; }
.s8 { width: 9px; height: 9px; } .s16 { width: 16px; height: 16px; } .s18 { width: 16px; height: 18px; } .drop { width: 21px; height: 24px; margin: 5px 0 0 2px; } .s22 { width: 22px; height: 22px; } .s24 { width: 24px; height: 24px; }
.grow { flex: 1; min-width: 0; }

.far { position: absolute; left: 1400px; top: 0; width: 307px; height: 964px; display: flex; flex-direction: column; background: #000; }
.far-purple { height: 9px; background: #2d0b68; border-bottom: 1px solid #4a4a4a; display: flex; justify-content: flex-end; }
.far-purple i { width: 37px; height: 7px; margin-top: 1px; background: #bdbdbd; border: solid #f5f5f5; border-width: 2px 0 0 3px; }
.far-tabs { height: 42px; }
.far-tools { height: 69px; background: #292929; border-bottom: 1px solid #444; display: flex; justify-content: flex-end; gap: 14px; padding: 7px 10px 0 0; }
.far-tools .dim { opacity: .4; margin-top: 3px; }
.far-note { height: 53px; background: #171b1e; border-bottom: 1px solid #3a3e41; padding-left: 250px; display: flex; flex-direction: column; color: #c07b25; font-size: 12px; line-height: 19px; padding-top: 8px; }
.bang { margin-left: -2px; }
.far-body { flex: 1; padding-top: 22px; }
.far-card { width: 269px; height: 252px; border-radius: 8px; background: #171a1e; color: #ddd; text-align: right; padding: 11px 8px 0 0; font-weight: 700; letter-spacing: 1px; }
.far-foot { height: 36px; background: #1b1f21; display: flex; align-items: center; justify-content: flex-end; gap: 16px; padding-top: 14px; }
.far-foot svg { margin-top: -2px; }

.maps { position: absolute; left: 0; top: 0; width: 1427px; height: 976px; border-radius: 0 0 10px 10px; overflow: hidden; background: #6f8f79; }
.tabs { height: 32px; background: #000; display: flex; color: #f1f1f1; font-size: 13px; }
.tab { display: flex; align-items: center; height: 32px; padding-bottom: 3px; gap: 8px; white-space: nowrap; }
.t1 { width: 245px; padding-left: 17px; margin: 0; border-right: 1px solid #5a5a5a; height: 30px; }
.fade { overflow: hidden; -webkit-mask-image: linear-gradient(90deg, #000 82%, transparent); mask-image: linear-gradient(90deg, #000 82%, transparent); }
.w177 { width: 177px; margin-right: -1px; } .w172 { width: 172px; margin-right: 4px; }
.t2 { width: 238px; padding: 0 11px 3px 11px; } .t3 { width: 600px; padding-left: 13px; gap: 10px; }
.tab.on { background: #292929; border-radius: 9px 9px 0 0; }
.bar { height: 36px; background: #292929; display: flex; align-items: center; color: #dcdcdc; }
.re { margin-left: -11px; color: #777; } .ho { margin-left: 16px; color: #777; width: 18px; }
.pill { height: 28px; border-radius: 14px; background: #393939; display: flex; align-items: center; }
.back-pill { flex: 1; margin-left: 13px; padding-left: 14px; gap: 11px; }
.url { font-size: 14px; color: #9b9b9b; white-space: nowrap; } .url b { color: #fff; font-weight: 400; font-size: 15px; }
.u1 { letter-spacing: .2px; } .u1 b { letter-spacing: .35px; } .u2 { letter-spacing: -.3px; } .u2 b { letter-spacing: .2px; }
.marks { height: 33px; background: #292929; border-bottom: 1px solid #545454; display: flex; align-items: center; color: #f1f1f1; font-size: 12.8px; padding-bottom: 4px; white-space: nowrap; }
.mark { width: 32px; display: flex; justify-content: center; flex: none; }
.back-marks { padding-left: 0; } .back-marks .mark:first-child { margin-left: -18px; }
.fold { width: 17px; height: 15px; } .back-marks .fold { margin-left: 8px; }
.dimtxt { color: #8e8e8e; margin-left: 7px; }
.maps-body { display: flex; height: 863px; }
.panel { width: 392px; background: #fff; color: #202124; display: flex; flex-direction: column; flex: none; position: relative; z-index: 1; box-shadow: 1px 0 2px rgba(0,0,0,.3); }
.head { height: 224px; border-bottom: 1px solid #bcbec1; box-shadow: 0 1px 3px rgba(0,0,0,.25); flex: none; }
.modes { display: flex; padding: 12px 0 0 40px; height: 72px; color: #303336; }
.mode { width: 50px; display: flex; flex-direction: column; align-items: center; }
.disc { width: 32px; height: 32px; border-radius: 50%; display: flex; align-items: center; justify-content: center; }
.best .disc { background: #e4edfd; }
.mode label { font-size: 11px; line-height: 14px; margin-top: 1px; letter-spacing: .3px; color: #202124; } .best label { font-weight: 500; }
.close { margin: 13px 0 0 9px; }
.route { display: flex; }
.fields { width: 280px; display: flex; flex-direction: column; gap: 8px; margin-left: 8px; }
.field { height: 40px; border: 1px solid #6a6d71; border-radius: 8px; padding: 0 7px; line-height: 38px; letter-spacing: .2px; white-space: nowrap; }
.clip { display: block; overflow: hidden; -webkit-mask-image: linear-gradient(90deg, #000 92%, transparent 101%); mask-image: linear-gradient(90deg, #000 92%, transparent 101%); }
.swap { margin: 32px 0 0 21px; }
.add { display: flex; align-items: center; margin-top: 18px; padding-left: 10px; gap: 26px; color: #5f6368; font-weight: 500; letter-spacing: .3px; }
.leave { height: 66px; border-bottom: 8px solid #d5d6db; display: flex; align-items: center; padding: 2px 18px 0 56px; box-sizing: border-box; letter-spacing: .3px; flex: none; }
.caret { border: 5px solid transparent; border-top-color: #303336; border-bottom: 0; margin-left: 9px; }
a { color: #1a73e8; font-weight: 500; letter-spacing: .1px; } .leave a { margin-left: auto; letter-spacing: .5px; }
.send { height: 57px; border-bottom: 1px solid #d5d6d9; display: flex; align-items: center; padding-left: 10px; gap: 26px; flex: none; }
.send a { letter-spacing: .32px; }
.trip { height: 111px; border-bottom: 1px solid #d5d6d9; padding: 15px 24px 0 8px; display: flex; gap: 24px; flex: none; }
.drive { height: 135px; }
.lead { color: #303336; } .drive .lead { margin-top: 2px; }
.row { display: flex; justify-content: space-between; white-space: nowrap; }
.row h3 { font-size: 16px; line-height: 26px; height: 24px; font-weight: 400; -webkit-text-stroke: .25px currentColor; }
.row .k1 { letter-spacing: .33px; } .row .k2 { letter-spacing: -.25px; }
.row .fast { color: #188038; letter-spacing: .1px; }
.sub { color: #5f6368; line-height: 20px; letter-spacing: -.03px; margin-top: 5px; }
.details { display: block; margin-top: 16px; line-height: 16px; letter-spacing: .2px; }
.segs { display: flex; align-items: center; margin-top: 8px; height: 18px; color: #303336; font-size: 12px; white-space: nowrap; }
.ic { width: 14px; height: 14px; } .ic.sep { width: 12px; height: 12px; margin: 0 9px 0 8px; }
.badge { height: 16px; border-radius: 3px; line-height: 16px; padding: 0 6px; margin-left: 5px; color: #000; }
.badge + .ic.sep { margin-left: 9px; }
.navy { background: #0a2bc4; color: #fff; font-weight: 500; } .steel { background: #2f8fc7; color: #fff; font-weight: 500; } .sky { background: #03a9f4; letter-spacing: .06px; }
.second { margin-top: 5px; padding-left: 3px; }
.point { height: 18px; width: 49px; text-align: center; line-height: 16px; border: 1px solid #ccced1; border-radius: 3px; color: #5f6368; font-weight: 500; }
.second .ic.sep { margin-left: 9px; }
.nearby { flex: 1; border-top: 9px solid #d5d6db; margin-top: -1px; background: linear-gradient(#fff 80%, #f3f3f3); }
.nearby h2 { font-size: 16px; line-height: 24px; padding: 16px 0 0 8px; -webkit-text-stroke: .25px currentColor; white-space: nowrap; letter-spacing: .36px; }
.spots { display: flex; padding: 33px 0 0 3px; }
.spot { width: 74px; display: flex; flex-direction: column; align-items: center; white-space: nowrap; }
.orb { width: 48px; height: 48px; border-radius: 50%; display: flex; align-items: center; justify-content: center; color: #fff; }
.orb svg { width: 22px; height: 22px; }
.green { background: #1a7530; } .teal { background: #1295a8; } .red { background: #b9201c; } .orange { background: #e06b00; } .slate { background: #607889; }
.spot label { font-size: 12px; line-height: 14px; margin-top: 13px; color: #5f6368; letter-spacing: .1px; }
.map { width: 1035px; position: relative; overflow: hidden; background: #6f9a7c; }
.shade { position: absolute; left: 184px; top: 0; }
.chips { position: absolute; left: 21px; top: 17px; display: flex; gap: 6px; }
.chip { height: 32px; border-radius: 16px; background: #fff; display: flex; align-items: center; gap: 5px; padding: 0 13px 0 9px; font-size: 14.6px; font-weight: 500; box-shadow: 0 1px 2px rgba(0,0,0,.3); white-space: nowrap; color: #202124; }
.gaschip { gap: 6px; width: 68px; padding-right: 0; }
.collapse { position: absolute; left: 0; top: 408px; width: 23px; height: 48px; background: #fff; border-radius: 0 8px 8px 0; box-shadow: 0 1px 3px rgba(0,0,0,.35); display: flex; align-items: center; padding-left: 9px; }
.collapse i { border: 4px solid transparent; border-right: 5px solid #5f6368; border-left: 0; }
.layers { position: absolute; left: 20px; top: 764px; width: 79px; height: 79px; border: 2px solid #fff; border-radius: 8px; overflow: hidden; box-shadow: 0 1px 4px rgba(0,0,0,.4); background: #171b17; }
.layers span { position: absolute; left: 9px; bottom: 7px; display: flex; align-items: center; gap: 5px; color: #fff; font-size: 12px; font-weight: 500; line-height: 16px; }
.credits { position: absolute; left: 937px; top: 949px; width: 490px; height: 15px; background: #777; display: flex; gap: 15px; padding-left: 4px; font-size: 10px; line-height: 15px; color: #222; }

.dmv { position: absolute; left: 626px; top: -1px; width: 1022px; height: 959px; border: 1px solid #050505; border-top: 0; border-radius: 0 0 11px 11px; overflow: hidden; background: #fafafa; padding-top: 1px; box-shadow: 0 0 1px #000, 0 4px 24px rgba(0,0,0,.5); }
.front { align-items: center; } .front .tab { flex: none; }
.lights { display: flex; gap: 8px; margin: -10px 0 0 20px; flex: none; }
.lights i { width: 12px; height: 12px; border-radius: 50%; } .lights .r { background: #ff544d; } .lights .y { background: #ffb429; } .lights .g { background: #26c23c; }
.f1 { width: 258px; padding-left: 32px; gap: 8px; }
.f2 { width: 241px; padding: 0 12px 3px 13px; gap: 8px; }
.f3 { width: 239px; padding: 0 11px 2px 10px; border-right: 1px solid #5a5a5a; height: 22px; } .f3 svg:first-child { width: 17px; height: 17px; }
.plus { margin: -3px 0 0 16px; } .down { margin: -2px 0 0 156px; }
.front-bar { padding-left: 5px; } .fwd { transform: scaleX(-1); color: #6d6d6d; }
.front-pill { width: 486px; margin: 0 6px 0 6px; padding: 0 10px 0 14px; gap: 10px; flex: none; }
.front-pill .s16 { margin-left: 6px; width: 17px; }
.front-marks { padding-left: 5px; } .front-marks .fold { margin-left: 8px; margin-right: 7px; }
.m1 { width: 75px; } .m2 { width: 77px; } .raquo { margin-right: 17px; font-size: 18px; margin-top: -3px; }
.view { height: 842px; display: flex; overflow: hidden; background: #fff; }
.gutter { width: 19px; background: linear-gradient(90deg, #c9cacc 80%, #77797c); flex: none; }
.gutter2 { width: 6px; background: linear-gradient(90deg, #77797c, #c9cacc); flex: none; }
.page { width: 982px; background: #fff; color: #000; flex: none; border-left: 0; }
.vbar { flex: 1; background: #fafafa; padding: 40px 0 0 3px; } .vbar i { display: block; width: 8px; height: 575px; border-radius: 4px; background: #c1c1c1; }
.hbar { height: 15px; border-top: 1px solid #ddd; padding: 4px 0 0 2px; background: #f8f8f8; } .hbar i { display: block; width: 987px; height: 8px; border-radius: 4px; background: #bababa; }
.brand { display: flex; height: 84px; padding-left: 21px; }
.names { margin-left: 9px; border-left: 1px solid #444; height: 60px; padding-left: 11px; white-space: nowrap; }
.n1 { font: 900 26px/26px Lato, sans-serif; letter-spacing: 6.800px; margin-top: -17px; height: 26px; -webkit-text-stroke: .7px #000; color: #000; }
.n2 { font: 700 17px/22px "DejaVu Serif Condensed", "DejaVu Serif", serif; letter-spacing: .3px; color: #111; margin-top: 7px; }
.n3 { font: 400 14px/18px Lato, sans-serif; color: #333; margin-top: 8px; letter-spacing: .08px; }
.mobile { height: 36px; margin: 0 20px; border-radius: 5px; color: #fff; font-weight: 500; text-align: center; line-height: 36px; background: repeating-linear-gradient(45deg, #d64946 0 9px, #c84844 9px 12px); }
.titlebar { height: 40px; width: 970px; margin-top: 20px; background: #3d6d6e; display: flex; align-items: center; padding-left: 21px; gap: 13px; color: #fff; }
h1 { font-size: 20px; font-weight: 700; line-height: 40px; white-space: nowrap; letter-spacing: -.07px; }
.crumbs { width: 970px; height: 41px; border-bottom: 1px solid #bfbfbf; display: flex; align-items: center; padding: 2px 0 0 16px; color: #3d6d6e; }
.home { margin: 0 15px 0 6px; } .here { margin-left: 14px; letter-spacing: -.01px; }
.cols { display: flex; margin: 20px 0 0 10px; gap: 17px; }
.side { width: 170px; font-size: 14.7px; }
.s-on { height: 24px; background: #3d6d6e; color: #fff; border-radius: 4px; padding-left: 6px; line-height: 24px; }
.s-sub { height: 24px; width: 166px; margin: 4px 0 0 14px; padding-left: 6px; line-height: 24px; background: #9ab3b4; clip-path: polygon(0 0, 156px 0, 166px 50%, 156px 100%, 0 100%); border-radius: 4px; }
.content { width: 762px; flex: none; }
.c-head { height: 27px; background: #3d6d6e; color: #fff; line-height: 28px; padding-left: 5px; border-radius: 2px 2px 0 0; }
.sheet { border: 1px solid #bfbfbf; margin-top: 3px; height: 700px; padding: 10px; }
.c-sub { height: 27px; background: #9ab3b4; line-height: 28px; padding-left: 5px; border-radius: 2px 2px 0 0; }
.blk { display: flex; gap: 4px; height: 28px; } .blk svg { margin-top: 1px; margin-left: 1px; }
.blk h4 { flex: 1; font-weight: 700; border-bottom: 1px solid #bfbfbf; padding: 9px 0 0 2px; line-height: 16px; }
.txt { padding: 13px 0 0 35px; } .txt p { line-height: 16px; margin-bottom: 16px; }
ul { padding-left: 75px; list-style: none; } li { line-height: 16px; margin-bottom: 7px; position: relative; white-space: nowrap; }
li::before { content: ""; position: absolute; left: -15px; top: 7px; width: 4px; height: 4px; border-radius: 50%; background: #000; }
.u-note { margin-top: -7px; height: 87px; } .elig { margin-top: 39px; } .u-elig { margin-top: 22px; height: 85px; } .need { margin-top: 23px; } .u-need { margin-top: 21px; }
li a { color: #3d6d6e; font-weight: 400; letter-spacing: 0; }
</style>
